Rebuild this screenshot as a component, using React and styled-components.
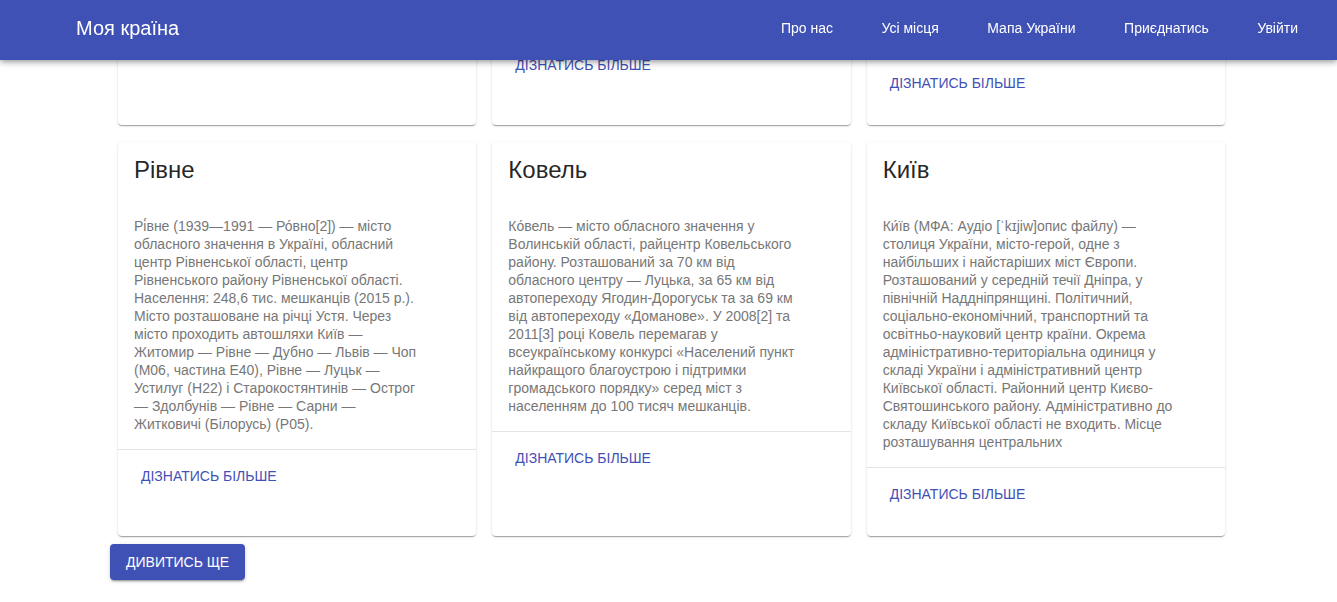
import React, { useLayoutEffect } from 'react';
import styled, { createGlobalStyle } from 'styled-components';

const GlobalStyle = createGlobalStyle`
	html { scroll-behavior: auto; }
	body {
		margin: 0;
		background: #fff;
		font-family: "Liberation Sans", Arial, Helvetica, sans-serif;
	}
	* { box-sizing: border-box; }
`;

const PRIMARY = '#3f51b5';

const navLinks = ['Про нас', 'Усі місця', 'Мапа України', 'Приєднатись', 'Увійти'];

// top row is scrolled under the app bar, text only has to keep the card heights
const places = [
	{
		title: 'Львів',
		text: 'Льві́в — місто в Україні,\nадміністративний центр Львівської\nобласті та Львівського району.\nНайбільше місто Західної України,\nшосте за кількістю населення\nв Україні. Культурний, науковий\nі промисловий центр регіону.\nІсторичний центр міста внесено\nдо списку Світової спадщини\nЮНЕСКО. Населення становить\nблизько 720 тисяч мешканців.'
	},
	{
		title: 'Луцьк',
		text: 'Луцьк — місто на північному заході\nУкраїни, адміністративний центр\nВолинської області. Розташований\nна річці Стир. Одне з найдавніших\nміст Волині, вперше згадане\nв літописі під 1085 роком.\nВідомий замком Любарта, який\nє символом міста. Важливий\nпромисловий, культурний та\nосвітній центр регіону.\nНаселення — понад 215 тисяч\nмешканців (2021 р.).'
	},
	{
		title: 'Одеса',
		text: 'Оде́са — місто на півдні України,\nадміністративний центр Одеської\nобласті. Розташоване на березі\nОдеської затоки Чорного моря.\nНайбільший морський порт країни\nі важливий транспортний вузол.\nЗаснована у 1794 році на місці\nпоселення Хаджибей. Відома своєю\nархітектурою, Потьомкінськими\nсходами та Оперним театром.\nКультурний, науковий і курортний\nцентр півдня України. Населення\nстановить близько 1 мільйона.'
	},
	{
		title: 'Рівне',
		text: 'Рі́вне (1939—1991 — Ро́вно[2]) — місто обласного значення в Україні, обласний центр Рівненської області, центр Рівненського району Рівненської області. Населення: 248,6 тис. мешканців (2015 р.). Місто розташоване на річці Устя. Через місто проходить автошляхи Київ — Житомир — Рівне — Дубно — Львів — Чоп (М06, частина Е40), Рівне — Луцьк — Устилуг (Н22) і Старокостянтинів — Острог — Здолбунів — Рівне — Сарни — Житковичі (Білорусь) (Р05).'
	},
	{
		title: 'Ковель',
		text: 'Ко́вель — місто обласного значення у Волинській області, райцентр Ковельського району. Розташований за 70 км від обласного центру — Луцька, за 65 км від автопереходу Ягодин-Дорогуськ та за 69 км від автопереходу «Доманове». У 2008[2] та 2011[3] році Ковель перемагав у всеукраїнському конкурсі «Населений пункт найкращого благоустрою і підтримки громадського порядку» серед міст з населенням до 100 тисяч мешканців.'
	},
	{
		title: 'Київ',
		text: 'Ки́їв (МФА: Аудіо [ˈkɪjiw]опис файлу) — столиця України, місто-герой, одне з найбільших і найстаріших міст Європи. Розташований у середній течії Дніпра, у північній Наддніпрянщині. Політичний, соціально-економічний, транспортний та освітньо-науковий центр країни. Окрема адміністративно-територіальна одиниця у складі України і адміністративний центр Київської області. Районний центр Києво-Святошинського району. Адміністративно до складу Київської області не входить. Місце розташування центральних'
	}
];

const App = () => {
	useLayoutEffect(() => {
		window.scrollTo(0, document.documentElement.scrollHeight);
	}, []);

	return (
		<>
			<GlobalStyle />
			<AppBar>
				<Brand>Моя країна</Brand>
				<Nav>
					{navLinks.map(link => <NavLink key={link}>{link}</NavLink>)}
				</Nav>
			</AppBar>

			<Main>
				<CardGrid>
					{places.map((place, i) => (
						<Card key={place.title}>
							<CardContent>
								<CardTitle>{place.title}</CardTitle>
								<CardText $preset={i < 3}>{place.text}</CardText>
							</CardContent>
							<CardActions>
								<TextButton>Дізнатись більше</TextButton>
							</CardActions>
						</Card>
					))}
				</CardGrid>
				<MoreButton>Дивитись ще</MoreButton>
			</Main>
		</>
	);
};

export default App;

const AppBar = styled.header`
	position: fixed;
	top: 0;
	left: 0;
	right: 0;
	z-index: 10;
	height: 60px;
	padding: 0 39px 4px 76px;
	display: flex;
	align-items: center;
	justify-content: space-between;
	background: ${PRIMARY};
	color: #fff;
	box-shadow: 0px 2px 4px -1px rgba(0, 0, 0, 0.2), 0px 4px 5px 0px rgba(0, 0, 0, 0.14),
		0px 1px 10px 0px rgba(0, 0, 0, 0.12);
`;

const Brand = styled.div`
	font-size: 20px;
	font-weight: 400;
`;

const Nav = styled.nav`
	display: flex;
	gap: 48.5px;
`;

const NavLink = styled.a`
	font-size: 14px;
	color: #fff;
	cursor: pointer;
`;

const Main = styled.main`
	width: 1123px;
	margin-left: 110px;
	padding: 80px 0 22px;
`;

const CardGrid = styled.div`
	display: grid;
	grid-template-columns: repeat(3, 1fr);
	gap: 17px 16px;
	margin: 0 8px 8px;
`;

const Card = styled.div`
	background: #fff;
	border-radius: 4px;
	box-shadow: 0px 2px 1px -1px rgba(0, 0, 0, 0.2), 0px 1px 1px 0px rgba(0, 0, 0, 0.14),
		0px 1px 3px 0px rgba(0, 0, 0, 0.12);
`;

const CardContent = styled.div`
	padding: 16px;
	border-bottom: 1px solid #e4e4e4;
`;

const CardTitle = styled.h2`
	margin: 0;
	font-size: 24px;
	line-height: 24px;
	font-weight: 400;
	color: rgba(0, 0, 0, 0.87);
`;

const CardText = styled.p`
	margin: 35px 0 0;
	max-width: 291px;
	font-size: 14px;
	line-height: 18px;
	color: #777;
	white-space: ${p => (p.$preset ? 'pre-line' : 'normal')};
`;

const CardActions = styled.div`
	padding: 8px 8px 24px;
`;

const TextButton = styled.button`
	height: 36px;
	padding: 6px 15px;
	border: none;
	background: transparent;
	color: ${PRIMARY};
	font-family: inherit;
	font-size: 14px;
	font-weight: 400;
	text-transform: uppercase;
	cursor: pointer;
`;

const MoreButton = styled.button`
	height: 36px;
	padding: 6px 16px;
	border: none;
	border-radius: 4px;
	background: ${PRIMARY};
	color: #fff;
	font-family: inherit;
	font-size: 14px;
	font-weight: 400;
	text-transform: uppercase;
	cursor: pointer;
	box-shadow: 0px 3px 1px -2px rgba(0, 0, 0, 0.2), 0px 2px 2px 0px rgba(0, 0, 0, 0.14),
		0px 1px 5px 0px rgba(0, 0, 0, 0.12);
`;
